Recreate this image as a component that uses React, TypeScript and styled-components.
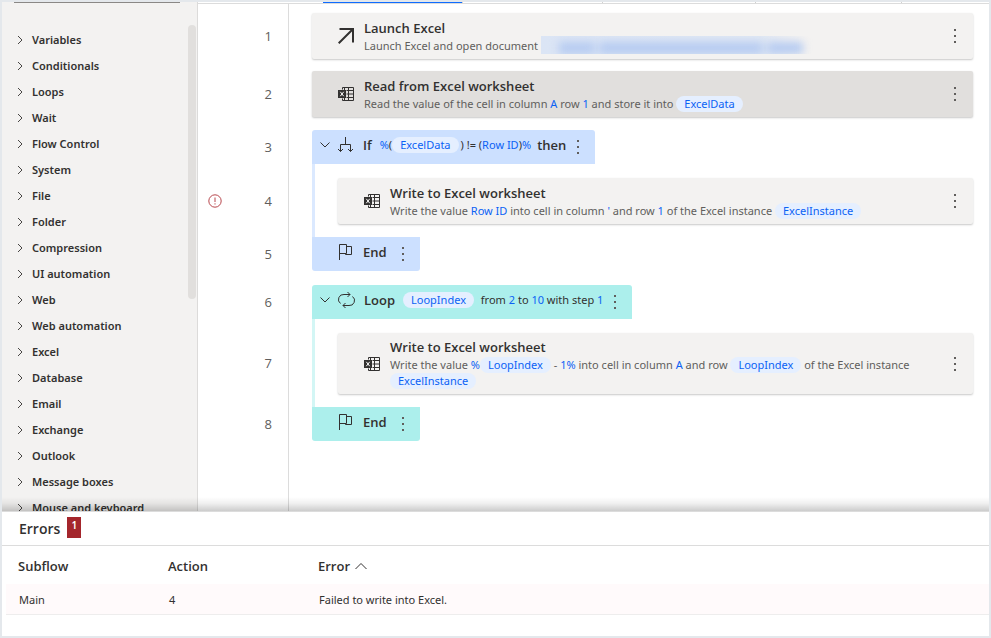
import React from 'react';
import styled, { createGlobalStyle, css } from 'styled-components';

const GlobalStyle = createGlobalStyle`
  *, *::before, *::after { box-sizing: border-box; }
  body {
    margin: 0;
    font-family: 'Noto Sans', 'Open Sans', sans-serif;
    font-size: 11px;
    line-height: 16px;
    color: #323130;
    background: #e4e8ec;
  }
  button { font: inherit; color: inherit; background: none; border: 0; padding: 0; cursor: pointer; }
  ul, ol { list-style: none; margin: 0; padding: 0; }
`;

const HEADING_FONT = "'Open Sans', 'Noto Sans', sans-serif";

const Window = styled.div`
  display: flex;
  flex-direction: column;
  height: 100vh;
  padding: 2px;
`;

const Workspace = styled.div`
  position: relative;
  display: flex;
  flex: 1;
  min-height: 0;
  overflow: hidden;
  background: #fff;
`;

const DockShade = styled.div`
  position: absolute;
  left: 0;
  right: 0;
  bottom: 0;
  height: 14px;
  pointer-events: none;
  background: linear-gradient(to bottom, rgba(0, 0, 0, 0), rgba(0, 0, 0, 0.06) 45%, rgba(0, 0, 0, 0.2));
`;

const Sidebar = styled.nav`
  display: flex;
  flex-direction: column;
  flex: none;
  width: 196px;
  background: #f3f2f1;
  border-right: 1px solid #dcdbda;
`;

const SearchEdge = styled.div`
  flex: none;
  height: 1px;
  margin: 0 17px 0 12px;
  background: #8a8886;
`;

const SidebarScroll = styled.div`
  display: flex;
  flex: 1;
  min-height: 0;
  padding-top: 24px;
`;

const ActionList = styled.ul`
  flex: 1;
  overflow: hidden;
`;

const ScrollThumb = styled.div`
  flex: none;
  width: 8px;
  height: 274px;
  margin: -2px 1px 0 0;
  border-radius: 4px;
  background: #e1dfdd;
`;

const ActionGroup = styled.button`
  display: flex;
  align-items: center;
  gap: 8px;
  width: 100%;
  height: 26px;
  padding-left: 14px;
  font-weight: 600;
  text-align: left;
`;

const Main = styled.main`
  display: flex;
  flex-direction: column;
  flex: 1;
  min-width: 0;
`;

const TabStrip = styled.div`
  display: grid;
  grid-template-columns: 125px 140px 140px 153px 146px 1fr;
  flex: none;
  height: 2px;
  border-bottom: 1px solid #dcdcdc;
`;

const TabEdge = styled.div<{ $active?: boolean }>`
  border-right: 1px solid #d0d0d0;
  background: ${(p) => (p.$active ? '#0f6cff' : 'transparent')};
  &:first-child, &:last-child { border-right: 0; }
`;

const Flow = styled.ol`
  display: flex;
  flex-direction: column;
  flex: 1;
`;

const space = css<{ $top?: number; $bottom?: number }>`
  padding-top: ${(p) => p.$top ?? 0}px;
  padding-bottom: ${(p) => p.$bottom ?? 0}px;
`;

const FlowRow = styled.li`
  display: grid;
  grid-template-columns: 91px 1fr;
  &:last-child { flex: 1; }
`;

const Gutter = styled.div<{ $top?: number; $bottom?: number }>`
  ${space}
  display: grid;
  grid-template-columns: 1fr 1fr;
  align-items: center;
  padding-left: 10px;
  padding-right: 16px;
  border-right: 1px solid #dcdcdc;
  color: #605e5c;
  font-family: ${HEADING_FONT};
  font-size: 13px;
`;

const LineNumber = styled.span`
  grid-column: 2;
  grid-row: 1;
  text-align: right;
`;

const Lane = styled.div<{ $top?: number; $bottom?: number }>`
  ${space}
  display: flex;
  min-width: 0;
  padding-left: 23px;
  padding-right: 16px;
`;

const Card = styled.article<{ $selected?: boolean }>`
  display: grid;
  grid-template-columns: 16px 1fr 24px;
  align-items: center;
  column-gap: 10px;
  flex: 1;
  min-width: 0;
  min-height: 46px;
  padding: 5px 6px 5px 26px;
  border-radius: 2px;
  background: ${(p) => (p.$selected ? '#e1dfdd' : '#f3f2f1')};
  box-shadow: 0 1px 2px rgba(0, 0, 0, 0.22);
`;

const CardTitle = styled.h3`
  margin: 0;
  font-family: ${HEADING_FONT};
  font-size: 13px;
  font-weight: 600;
  line-height: 19px;
`;

const CardText = styled.p`
  margin: 0;
  color: #605e5c;
`;

const Value = styled.span`
  color: #0b62f5;
`;

const Chip = styled.span<{ $after?: number }>`
  display: inline-block;
  height: 16px;
  margin-right: ${(p) => p.$after ?? 0}px;
  padding: 0 8px;
  border-radius: 8px;
  background: #e5efff;
  color: #0b62f5;
`;

const HiddenPath = styled.span`
  display: inline-block;
  vertical-align: top;
  width: 272px;
  height: 18px;
  margin: -2px 0 0 0;
  overflow: hidden;
  background: linear-gradient(to right, #dbe5f5 0, #e0e8f4 80%, #f3f2f1 96%);
`;

const Smudge = styled.span`
  display: flex;
  gap: 4px;
  height: 12px;
  margin: 6px 10px 0 18px;
  filter: blur(4px);
  & > i { background: #b6cbf1; }
  & > i:nth-child(1) { flex: 2; }
  & > i:nth-child(2) { flex: 9; }
  & > i:nth-child(3) { flex: 2; }
`;

const Nest = styled.div<{ $bar: string }>`
  display: flex;
  flex: 1;
  min-width: 0;
  padding: 14px 0 13px 23px;
  border-left: 3px solid ${(p) => p.$bar};
`;

const BlockEdge = styled.div<{ $fill: string; $end?: boolean }>`
  display: flex;
  align-items: center;
  height: 34px;
  padding: 0 5px 4px ${(p) => (p.$end ? 26 : 8)}px;
  border-radius: ${(p) => (p.$end ? '0 0 3px 3px' : '3px 3px 0 0')};
  background: ${(p) => p.$fill};
  white-space: nowrap;
`;

const BlockToggle = styled.button`
  display: flex;
  width: 10px;
  margin-right: 8px;
`;

const Keyword = styled.strong<{ $left?: number; $right?: number }>`
  margin: 0 ${(p) => p.$right ?? 0}px 0 ${(p) => p.$left ?? 0}px;
  font-family: ${HEADING_FONT};
  font-size: 13px;
  font-weight: 600;
`;

const KebabButton = styled.button<{ $low?: boolean }>`
  display: flex;
  flex: none;
  align-items: center;
  justify-content: center;
  align-self: ${(p) => (p.$low ? 'flex-end' : 'center')};
  width: 24px;
  height: 26px;
`;

const Dock = styled.section`
  flex: none;
  padding-bottom: 21px;
  border-top: 1px solid #dcdcdc;
  background: #fff;
`;

const DockHeader = styled.header`
  display: flex;
  align-items: center;
  gap: 7px;
  height: 34px;
  padding-left: 17px;
  border-bottom: 1px solid #dcdcdc;
`;

const DockTitle = styled.h2`
  margin: 0;
  padding-top: 1px;
  font-family: ${HEADING_FONT};
  font-size: 14px;
  font-weight: 600;
  line-height: 20px;
`;

const Count = styled.span`
  width: 14px;
  height: 21px;
  margin-bottom: 1px;
  background: #a4262c;
  color: #fff;
  font-size: 10px;
  font-weight: 600;
  text-align: center;
`;

const ErrorTable = styled.table`
  width: calc(100% - 4px);
  margin-left: 4px;
  border-collapse: collapse;
  table-layout: fixed;
  text-align: left;

  th, td { padding: 0 0 0 12px; }
  th { height: 38px; padding-top: 2px; font-family: ${HEADING_FONT}; font-size: 13px; font-weight: 600; }
  th:nth-child(-n + 2) { width: 150px; }
  td { height: 31px; padding-top: 2px; padding-left: 13px; background: #fffafb; border-bottom: 1px solid #eeeded; }
`;

const SortButton = styled.button`
  display: flex;
  align-items: center;
  gap: 5px;
`;

const Kebab = ({ label, low }: { label: string; low?: boolean }) => (
  <KebabButton $low={low} aria-label={`More actions for ${label}`}>
    <svg width="2" height="14" viewBox="0 0 2 14" fill="#605e5c">
      <rect width="2" height="2" />
      <rect y="6" width="2" height="2" />
      <rect y="12" width="2" height="2" />
    </svg>
  </KebabButton>
);

const ChevronRight = () => (
  <svg width="8" height="10" viewBox="0 0 8 10" fill="none" stroke="#484644">
    <path d="M2 1 6 5l-4 4" />
  </svg>
);

const ChevronDown = () => (
  <svg width="10" height="8" viewBox="0 0 10 8" fill="none" stroke="#323130">
    <path d="m.5 1.5 4.5 4.500 4.500-4.500" />
  </svg>
);

const LaunchIcon = () => (
  <svg width="16" height="16" viewBox="0 0 16 16" fill="none" stroke="#323130" strokeWidth="2">
    <path d="M1.500 1H15v13.500M15 1 .7 15.300" />
  </svg>
);

const ExcelIcon = () => (
  <svg width="16" height="14" viewBox="0 0 16 14" fill="none" stroke="#323130">
    <path d="M4.500 2.500v-2h11v13h-11v-2M10.500.5v13M8.500 3.500h7M8.500 7h7M8.500 10.500h7M6.500.5v3M6.500 10.500v3" />
    <path d="M0 3h8v8H0z" fill="#323130" stroke="none" />
    <path d="m2.300 4.800 3.400 4.400M5.700 4.800 2.300 9.200" stroke="#fff" />
  </svg>
);

const BranchIcon = () => (
  <svg width="15" height="16" viewBox="0 0 15 16" fill="none" stroke="#323130">
    <path d="M7.500 0v7.500M2.500 14.500v-7h10v7M0 12l2.500 2.500L5 12M10 12l2.500 2.500L15 12" />
  </svg>
);

const FlagIcon = () => (
  <svg width="15" height="16" viewBox="0 0 15 16" fill="none" stroke="#323130">
    <path d="M1.500 16V.5h7v9h-7M8.500 2.500h5v8h-6v-1" />
  </svg>
);

const LoopIcon = () => (
  <svg width="18" height="16" viewBox="0 0 18 16" fill="none" stroke="#323130">
    <path d="M9.500 0 12 2.500 9.500 5M12 2.500H6A5 5 0 0 0 2.500 11.500M7.500 16 5 13.500 7.500 11M5 13.500H11A5 5 0 0 0 14.500 4.500" />
  </svg>
);

const ErrorIcon = () => (
  <svg role="img" aria-label="Error" width="14" height="14" viewBox="0 0 14 14" fill="none" stroke="#b8474d">
    <circle cx="7" cy="7" r="6.200" />
    <path d="M7 3.500V8M7 9.300v1.200" />
  </svg>
);

const SortUp = () => (
  <svg width="12" height="8" viewBox="0 0 12 8" fill="none" stroke="#323130">
    <path d="M.5 7 6 1.500 11.500 7" />
  </svg>
);

const groups = [
  'Variables', 'Conditionals', 'Loops', 'Wait', 'Flow Control', 'System', 'File', 'Folder',
  'Compression', 'UI automation', 'Web', 'Web automation', 'Excel', 'Database', 'Email',
  'Exchange', 'Outlook', 'Message boxes', 'Mouse and keyboard',
];

const BLUE = '#cce0ff';
const TEAL = '#acefec';

type StepProps = {
  n: number;
  top?: number;
  bottom?: number;
  error?: boolean;
  children: React.ReactNode;
};

const Step = ({ n, top, bottom, error, children }: StepProps) => (
  <FlowRow>
    <Gutter $top={top} $bottom={bottom}>
      {error && <ErrorIcon />}
      <LineNumber>{n}</LineNumber>
    </Gutter>
    <Lane $top={top} $bottom={bottom}>{children}</Lane>
  </FlowRow>
);

type ActionCardProps = {
  icon: React.ReactNode;
  title: string;
  selected?: boolean;
  children: React.ReactNode;
};

const ActionCard = ({ icon, title, selected, children }: ActionCardProps) => (
  <Card $selected={selected}>
    {icon}
    <div>
      <CardTitle>{title}</CardTitle>
      <CardText>{children}</CardText>
    </div>
    <Kebab label={title} />
  </Card>
);

const EndBlock = ({ fill }: { fill: string }) => (
  <BlockEdge $fill={fill} $end>
    <FlagIcon />
    <Keyword $left={10} $right={4}>End</Keyword>
    <Kebab label="End" low />
  </BlockEdge>
);

export default function App() {
  return (
    <>
      <GlobalStyle />
      <Window>
        <Workspace>
          <Sidebar aria-label="Actions">
            <SearchEdge />
            <SidebarScroll>
              <ActionList>
                {groups.map((name) => (
                  <li key={name}>
                    <ActionGroup aria-expanded={false}>
                      <ChevronRight />
                      {name}
                    </ActionGroup>
                  </li>
                ))}
              </ActionList>
              <ScrollThumb />
            </SidebarScroll>
          </Sidebar>
          <Main>
            <TabStrip>
              <TabEdge />
              <TabEdge $active />
              <TabEdge />
              <TabEdge />
              <TabEdge />
              <TabEdge />
            </TabStrip>
            <Flow>
              <Step n={1} top={9} bottom={6}>
                <ActionCard icon={<LaunchIcon />} title="Launch Excel">
                  Launch Excel and open document{' '}
                  <HiddenPath aria-hidden><Smudge><i /><i /><i /></Smudge></HiddenPath>
                </ActionCard>
              </Step>
              <Step n={2} top={6} bottom={6}>
                <ActionCard icon={<ExcelIcon />} title="Read from Excel worksheet" selected>
                  Read the value of the cell in column <Value>A</Value> row <Value>1</Value> and store it into{' '}
                  <Chip>ExcelData</Chip>
                </ActionCard>
              </Step>
              <Step n={3} top={7}>
                <BlockEdge $fill={BLUE}>
                  <BlockToggle aria-label="Collapse If"><ChevronDown /></BlockToggle>
                  <BranchIcon />
                  <Keyword $left={10} $right={8}>If</Keyword>
                  <span>
                    <Value>%</Value>(<Chip $after={2}>ExcelData</Chip>) != (<Value>Row ID</Value>)<Value>%</Value>
                  </span>
                  <Keyword $left={6}>then</Keyword>
                  <Kebab label="If" low />
                </BlockEdge>
              </Step>
              <Step n={4} error>
                <Nest $bar="#dbe9ff">
                  <ActionCard icon={<ExcelIcon />} title="Write to Excel worksheet">
                    Write the value <Value>Row ID</Value> into cell in column <Value>'</Value> and row{' '}
                    <Value>1</Value> of the Excel instance <Chip>ExcelInstance</Chip>
                  </ActionCard>
                </Nest>
              </Step>
              <Step n={5} bottom={7}>
                <EndBlock fill={BLUE} />
              </Step>
              <Step n={6} top={7}>
                <BlockEdge $fill={TEAL}>
                  <BlockToggle aria-label="Collapse Loop"><ChevronDown /></BlockToggle>
                  <LoopIcon />
                  <Keyword $left={8} $right={8}>Loop</Keyword>
                  <span>
                    <Chip $after={4}>LoopIndex</Chip> from <Value>2</Value> to <Value>10</Value> with step <Value>1</Value>
                  </span>
                  <Kebab label="Loop" low />
                </BlockEdge>
              </Step>
              <Step n={7}>
                <Nest $bar="#d3f6f5">
                  <ActionCard icon={<ExcelIcon />} title="Write to Excel worksheet">
                    Write the value <Value>%</Value><Chip>LoopIndex</Chip> - <Value>1%</Value> into cell in column{' '}
                    <Value>A</Value> and row <Chip>LoopIndex</Chip> of the Excel instance <Chip>ExcelInstance</Chip>
                  </ActionCard>
                </Nest>
              </Step>
              <Step n={8}>
                <EndBlock fill={TEAL} />
              </Step>
              <FlowRow aria-hidden><Gutter /></FlowRow>
            </Flow>
          </Main>
          <DockShade />
        </Workspace>
        <Dock aria-label="Errors">
          <DockHeader>
            <DockTitle>Errors</DockTitle>
            <Count>1</Count>
          </DockHeader>
          <ErrorTable>
            <thead>
              <tr>
                <th>Subflow</th>
                <th>Action</th>
                <th aria-sort="ascending"><SortButton>Error <SortUp /></SortButton></th>
              </tr>
            </thead>
            <tbody>
              <tr>
                <td>Main</td>
                <td>4</td>
                <td>Failed to write into Excel.</td>
              </tr>
            </tbody>
          </ErrorTable>
        </Dock>
      </Window>
    </>
  );
}
